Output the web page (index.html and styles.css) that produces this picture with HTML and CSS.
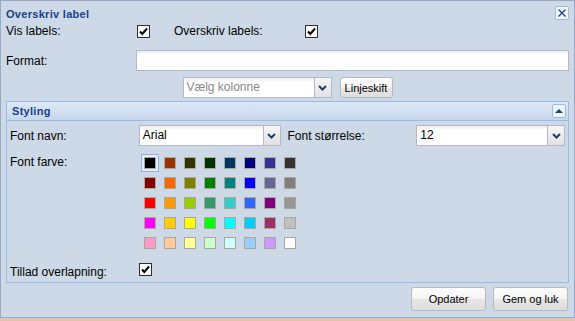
FILE: index.html
```html
<!DOCTYPE html>
<html lang="da">
<head>
  <meta charset="UTF-8">
  <title>Overskriv label</title>
  <link rel="stylesheet" href="styles.css">
</head>
<body>
  <div class="window">
    <div class="win-header">
      <span class="win-title">Overskriv label</span>
      <span class="tool">
        <svg width="12" height="12" viewBox="0 0 12 12"><path d="M2.5 2.5 L9.5 9.5 M9.5 2.5 L2.5 9.5" stroke="#15428b" stroke-width="1.3" fill="none"/></svg>
      </span>
    </div>

    <div class="row row-check">
      <span class="label">Vis labels:</span>
      <span class="check">
        <svg width="13" height="13" viewBox="0 0 13 13"><rect x="0.5" y="0.5" width="12" height="12" fill="#fff" stroke="#2e2e2e"/><path d="M3 6.5 L5.3 9 L10 3.5" stroke="#000" stroke-width="2" fill="none"/></svg>
      </span>
      <span class="label label-2">Overskriv labels:</span>
      <span class="check">
        <svg width="13" height="13" viewBox="0 0 13 13"><rect x="0.5" y="0.5" width="12" height="12" fill="#fff" stroke="#2e2e2e"/><path d="M3 6.5 L5.3 9 L10 3.5" stroke="#000" stroke-width="2" fill="none"/></svg>
      </span>
    </div>

    <div class="row row-format">
      <span class="label label-format">Format:</span>
      <span class="input input-wide"></span>
    </div>

    <div class="row row-column">
      <span class="combo combo-column">
        <span class="combo-text placeholder">Vælg kolonne</span>
        <span class="trigger"><svg width="9" height="6" viewBox="0 0 9 6"><path d="M1 1 L4.5 4.5 L8 1" stroke="#1f3d72" stroke-width="2" fill="none"/></svg></span>
      </span>
      <span class="btn btn-small">Linjeskift</span>
    </div>

    <div class="fieldset">
      <div class="fs-header">
        <span class="fs-title">Styling</span>
        <span class="tool tool-up">
          <svg width="12" height="12" viewBox="0 0 12 12"><path d="M2 8 L6 4 L10 8 Z" fill="#15428b"/></svg>
        </span>
      </div>
      <div class="fs-body">
        <div class="fs-row">
          <span class="label label-fs">Font navn:</span>
          <span class="combo combo-font">
            <span class="combo-text">Arial</span>
            <span class="trigger"><svg width="9" height="6" viewBox="0 0 9 6"><path d="M1 1 L4.5 4.5 L8 1" stroke="#1f3d72" stroke-width="2" fill="none"/></svg></span>
          </span>
          <span class="label label-size">Font størrelse:</span>
          <span class="combo combo-size">
            <span class="combo-text">12</span>
            <span class="trigger"><svg width="9" height="6" viewBox="0 0 9 6"><path d="M1 1 L4.5 4.5 L8 1" stroke="#1f3d72" stroke-width="2" fill="none"/></svg></span>
          </span>
        </div>

        <div class="fs-row fs-colors">
          <span class="label label-color">Font farve:</span>
          <div class="palette" id="palette"></div>
        </div>

        <div class="fs-row fs-overlap">
          <span class="label label-overlap">Tillad overlapning:</span>
          <span class="check">
            <svg width="13" height="13" viewBox="0 0 13 13"><rect x="0.5" y="0.5" width="12" height="12" fill="#fff" stroke="#2e2e2e"/><path d="M3 6.5 L5.3 9 L10 3.5" stroke="#000" stroke-width="2" fill="none"/></svg>
          </span>
        </div>
      </div>
    </div>

    <div class="buttons">
      <span class="btn btn-big">Opdater</span>
      <span class="btn btn-big">Gem og luk</span>
    </div>
  </div>

  <script>
    const colors = [
      '000000','993300','333300','003300','003366','000080','333399','333333',
      '800000','FF6600','808000','008000','008080','0000FF','666699','808080',
      'FF0000','FF9900','99CC00','339966','33CCCC','3366FF','800080','969696',
      'FF00FF','FFCC00','FFFF00','00FF00','00FFFF','00CCFF','993366','C0C0C0',
      'FF99CC','FFCC99','FFFF99','CCFFCC','CCFFFF','99CCFF','CC99FF','FFFFFF'
    ];
    const palette = document.getElementById('palette');
    colors.forEach((c, i) => {
      const cell = document.createElement('span');
      cell.className = i === 0 ? 'cell selected' : 'cell';
      const sw = document.createElement('span');
      sw.className = 'swatch';
      sw.style.background = '#' + c;
      cell.appendChild(sw);
      palette.appendChild(cell);
    });
  </script>
</body>
</html>
```

FILE: styles.css
```css
body {
  margin: 0;
  font-family: "Liberation Sans", Arial, sans-serif;
  font-size: 12px;
  color: #000;
  background: #e2c3ae;
}
.window {
  width: 573px;
  height: 316px;
  border: 1px solid #99a9c4;
  background: #cdd9e7;
}
.win-header {
  height: 23px;
  display: flex;
  align-items: center;
  justify-content: space-between;
  padding: 0 5px 0 5px;
}
.win-title {
  font-size: 11px;
  font-weight: bold;
  letter-spacing: 0.3px;
  color: #15428b;
  margin-top: 3px;
}
.tool {
  width: 12px;
  height: 12px;
  border: 1px solid #99bbe8;
  border-radius: 2px;
  background: #f3f7fd;
  display: flex;
  align-items: center;
  justify-content: center;
}
.row {
  display: flex;
  align-items: center;
  padding: 0 5px;
}
.row-check {
  height: 14px;
}
.label {
  display: inline-block;
  white-space: nowrap;
}
.row-check .label {
  width: 131px;
}
.row-check .label-2 {
  margin-left: 24px;
}
.check {
  width: 13px;
  height: 13px;
  display: flex;
}
.row-format {
  height: 21px;
  margin-top: 12px;
}
.label-format {
  width: 130px;
}
.input {
  display: block;
  box-sizing: border-box;
  height: 21px;
  border: 1px solid #b5b8c8;
  background: linear-gradient(#ececec, #fff 4px);
}
.input-wide {
  flex: 1;
}
.row-column {
  height: 21px;
  margin-top: 6px;
  justify-content: center;
  gap: 8px;
}
.combo {
  box-sizing: border-box;
  height: 21px;
  display: flex;
  border: 1px solid #b5b8c8;
  background: linear-gradient(#ececec, #fff 4px);
}
.combo-text {
  flex: 1;
  padding-left: 3px;
  line-height: 19px;
  font-size: 12px;
}
.placeholder {
  color: #8a8a8a;
}
.trigger {
  width: 16px;
  border-left: 1px solid #b5b8c8;
  background: linear-gradient(#f6f6f6, #e2e2e2);
  display: flex;
  align-items: center;
  justify-content: center;
}
.combo-column {
  width: 149px;
}
.btn {
  box-sizing: border-box;
  display: flex;
  align-items: center;
  justify-content: center;
  border: 1px solid #b9b9b9;
  border-radius: 3px;
  background: linear-gradient(#fefefe 0%, #f4f4f4 50%, #e6e6e6 51%, #dedede 100%);
  font-size: 11px;
  color: #000;
}
.btn-small {
  width: 53px;
  height: 21px;
}
.fieldset {
  box-sizing: border-box;
  height: 182px;
  margin: 3px 5px 0 5px;
  border: 1px solid #99bbe8;
}
.fs-header {
  height: 18px;
  display: flex;
  align-items: center;
  justify-content: space-between;
  padding: 0 2px 0 5px;
  border-bottom: 1px solid #99bbe8;
  background: linear-gradient(#dde8f6, #c7d7ec);
}
.fs-title {
  font-size: 11px;
  font-weight: bold;
  letter-spacing: 0.3px;
  color: #15428b;
}
.tool-up {
  background: #eef4fd;
}
.fs-body {
  padding: 4px 3px 0 3px;
}
.fs-row {
  display: flex;
  align-items: center;
}
.label-fs {
  width: 129px;
}
.combo-font {
  width: 142px;
}
.label-size {
  margin-left: 7px;
  width: 129px;
}
.combo-size {
  width: 149px;
}
.fs-colors {
  align-items: flex-start;
  margin-top: 7px;
}
.label-color {
  width: 130px;
  padding-top: 2px;
}
.palette {
  display: grid;
  grid-template-columns: repeat(8, 20px);
  grid-auto-rows: 20px;
}
.cell {
  display: flex;
  align-items: center;
  justify-content: center;
}
.cell.selected {
  box-sizing: border-box;
  margin: 1px;
  border: 1px solid #8db2e3;
  background: #e3ecf8;
}
.swatch {
  width: 10px;
  height: 10px;
  border: 1px solid #aca899;
}
.fs-overlap {
  margin-top: 6px;
  height: 20px;
}
.label-overlap {
  width: 129px;
  padding-top: 6px;
}
.buttons {
  display: flex;
  justify-content: flex-end;
  gap: 7px;
  margin-top: 4px;
  padding-right: 6px;
}
.btn-big {
  width: 75px;
  height: 24px;
}
```
